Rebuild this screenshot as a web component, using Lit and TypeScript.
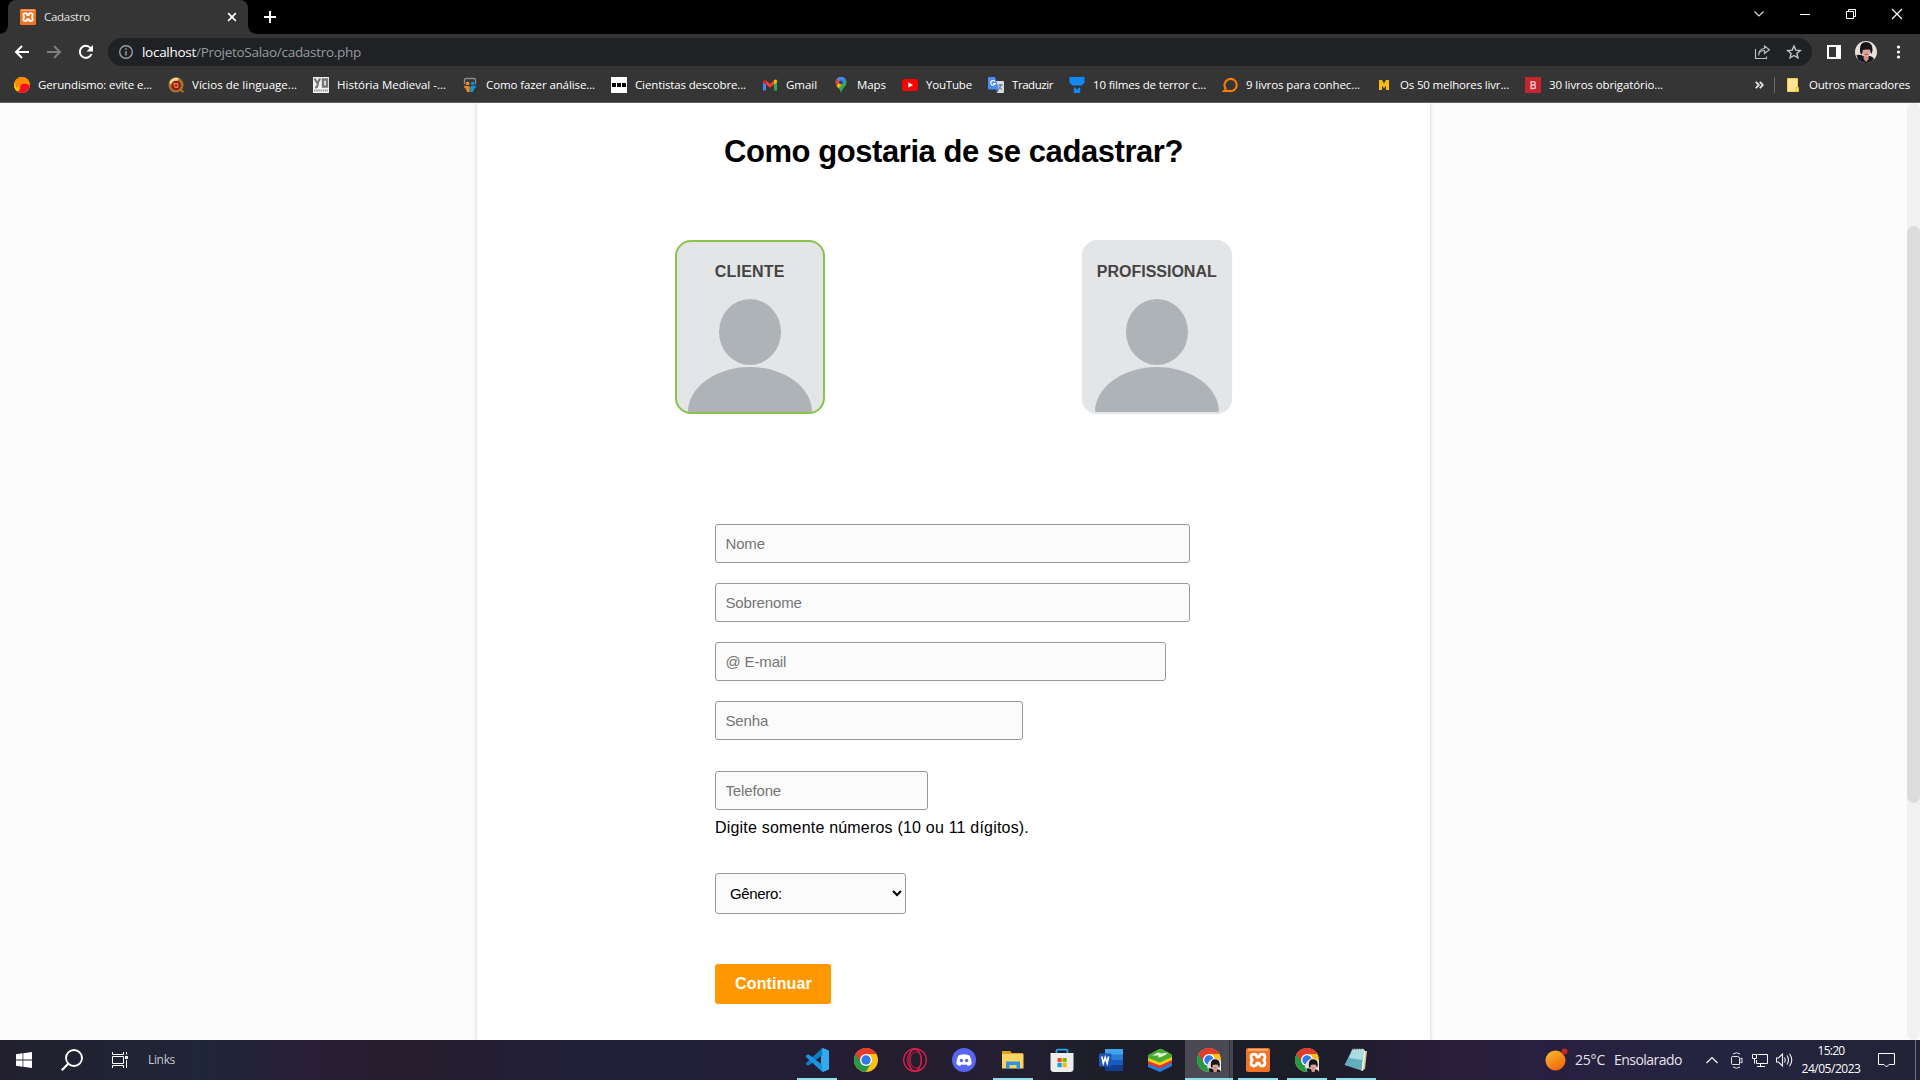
import { LitElement, html, css, svg } from "lit";
import { customElement, property } from "lit/decorators.js";

/* Text set to an exact advance width by spreading the difference over its letters. */
@customElement("fit-text")
class FitText extends LitElement {
  @property({ type: Number }) w = 0;
  static styles = css`
    :host { display: inline-block; white-space: pre; flex: none; }
    .t { display: inline-block; }
  `;
  render() {
    return html`<span class="t"><slot></slot></span>`;
  }
  firstUpdated() {
    const span = this.renderRoot.querySelector(".t") as HTMLElement;
    const n = (this.textContent || "").length;
    const natural = span.getBoundingClientRect().width;
    if (n > 1 && this.w) this.style.letterSpacing = `${(this.w - natural) / n}px`;
    this.style.width = `${this.w}px`;
  }
}

const icon = (size: number, body: unknown, box = size) =>
  html`<svg class="ic" width=${size} height=${size} viewBox="0 0 ${box} ${box}">${body}</svg>`;

const xampp = svg`
  <rect width="24" height="24" rx="2" fill="#f07423"/><rect x="2" y="1" width="20" height="1.6" fill="#fbb98b"/>
  <path d="M8 6.200Q5 6.200 5 9Q5 11 6.400 12Q5 13 5 15Q5 18 8 18Q10.600 18 10.800 15.200H13.200Q13.400 18 16 18Q19 18 19 15Q19 13 17.600 12Q19 11 19 9Q19 6.200 16 6.200Q13.400 6.200 13.200 9H10.800Q10.600 6.200 8 6.200Z" fill="none" stroke="#fff" stroke-width="2.800" stroke-linejoin="round"/>`;

const face = svg`
  <circle cx="11" cy="11" r="11" fill="#e8e0dd"/>
  <path d="M1.500 14Q6 13 8 15H14Q18 15 19 18.500Q15.500 22 11 22T3 18.500Z" fill="#19181b"/>
  <path d="M8.600 14h5v4l-2.400 3-2.600-3z" fill="#cf8f86"/>
  <ellipse cx="11.300" cy="10.500" rx="3.800" ry="5.500" fill="#dfa39d"/>
  <path d="M5.200 12Q4 3 8.500 1.500Q14 0 16.600 4Q18.500 9 16.400 13Q15.400 12 15 8.800L11 8.600L7.800 9Q7.600 12 7 13.500Z" fill="#161417"/>
  <path d="M9.800 13.400h3" stroke="#b9484e" stroke-width="1.200"/>`;

const chrome = svg`
  <circle cx="12" cy="12" r="12" fill="#fbc116"/>
  <path d="M1.600 6A12 12 0 0 0 11.800 24L17.200 15L12 12Z" fill="#279847"/>
  <path d="M1.600 6L7 15L12 6H22.400A12 12 0 0 0 1.600 6Z" fill="#e33b2e"/>
  <circle cx="12" cy="12" r="6" fill="#fff"/><circle cx="12" cy="12" r="4.700" fill="#3279e8"/>`;

const chromeProfile = svg`${chrome}
  <g transform="translate(10.2 10.4) scale(.72)">${face}</g>`;

const bookmarks = [
  { t: "Gerundismo: evite e...", w: 114, i: svg`<circle cx="8" cy="8" r="8" fill="#ff9d00"/><path d="M0 7A8 8 0 0 0 4 15Q6 9 1 5Z" fill="#ffc400"/><path d="M6 10Q7 6 11 6.500Q15 7 15.800 9A8 8 0 0 1 3 14.300Q7 14.500 6 10Z" fill="#f5102a"/><path d="M1 5Q3 0 8 0T15.500 6Q11 3 7 6T3 12Q1 9 1 5Z" fill="#ff8a00"/>` },
  { t: "Vícios de linguage...", w: 105, i: svg`<circle cx="8" cy="7.800" r="7.600" fill="#a8722c"/><path d="M1.500 5Q5 -.5 11 1.200L9 4.500 3 8.500Z" fill="#f3d78f"/><circle cx="8" cy="8.500" r="4.800" fill="#8f1a13"/><path d="M5.500 6.500h4.500v4h-3z" stroke="#e9a55a" fill="#c5301f" stroke-width=".8"/><path d="M12.500 13l3 2" stroke="#b5762c" stroke-width="2"/>` },
  { t: "História Medieval -...", w: 109, i: svg`<rect width="16" height="16" fill="#f2f2f2"/><path d="M1.500 1.500L4.500 6.500L7 1.500M4.800 6Q5 10.500 2 10.500" stroke="#777" stroke-width="2.200" fill="none"/><path d="M10 2.500h4v7h-4z" stroke="#777" stroke-width="2.400" fill="none"/><path d="M1 13.500h14" stroke="#999" stroke-width="2" stroke-dasharray="1.500 .7"/>` },
  { t: "Como fazer análise...", w: 109, i: svg`<path d="M2.500 7V2.500Q2.500 1.500 4 1.500H12Q13.500 1.500 13.500 2.500V7" fill="none" stroke="#8c8c8c" stroke-width="1.300"/><circle cx="5.600" cy="6.400" r="1.900" fill="#f08a1c"/><circle cx="10.600" cy="6.400" r="1.900" fill="#0f8bd0"/><path d="M2 8.500Q4.500 9.500 7.700 9.300V15H5L3.800 11.500Q2 11 2 8.500Z" fill="#f08a1c"/><path d="M14 8.500Q11.500 9.500 8.300 9.300V15H11L12.200 11.500Q14 11 14 8.500Z" fill="#0f9be4"/>` },
  { t: "Cientistas descobre...", w: 111, i: svg`<rect width="16" height="16" fill="#fff"/><path d="M1 6h4v4H1zM6 6h4v4H6zM11 6h4v4h-4z" fill="#000"/>` },
  { t: "Gmail", w: 31, i: svg`<path d="M1 4V13.500H4V7z" fill="#4285f4"/><path d="M15 4V13.500H12V7z" fill="#34a853"/><path d="M4 3.500L8 6.700L12 3.500V7.500L8 10.700L4 7.500z" fill="#ea4335"/><path d="M1 4Q1.600 1.600 4 3.300V7.500L1 5.300z" fill="#c5221f"/><path d="M15 4Q14.400 1.600 12 3.300V7.500L15 5.300z" fill="#fbbc04"/>` },
  { t: "Maps", w: 29, i: svg`<path d="M8 0A5.500 5.500 0 0 0 2.500 5.500Q2.500 8 5 10.500T8 16Q8.500 13 11 10.500T13.500 5.500A5.500 5.500 0 0 0 8 0Z" fill="#34a853"/><path d="M3 3.200A5.500 5.500 0 0 1 9.700 .3L6 5.500 3.700 9Q2 6 3 3.200Z" fill="#ea4335"/><path d="M3.800 1.900A5.500 5.500 0 0 1 13 3.200L9.600 6.800 7 4.600Z" fill="#4285f4"/><path d="M3.600 9L6.300 5.400 9.500 6.900 5.500 11.300Z" fill="#fbbc04"/><circle cx="8" cy="5.500" r="2" fill="#24477d"/>` },
  { t: "YouTube", w: 46, i: svg`<rect y="2" width="16" height="12" rx="2.600" fill="#f00"/><path d="M6.300 5.200L11 8L6.300 10.800Z" fill="#fff"/>` },
  { t: "Traduzir", w: 41, i: svg`<path d="M7 4H15Q16 4 16 5V15Q16 16 15 16H9Z" fill="#d9dde1"/><path d="M0 1Q0 0 1 0H7L11 12.500H1Q0 12.500 0 11.500Z" fill="#4c8bf5"/><path d="M6.900 4.500A2.300 2.300 0 1 0 7.200 6.500H5" fill="none" stroke="#fff" stroke-width="1.200"/><path d="M10 8h5M12.500 7v1Q12.200 11 10.800 12M11 9.500l3 3.500" fill="none" stroke="#67727c"/><path d="M8 12.500h3l-2 3.300z" fill="#2c5fc4"/>` },
  { t: "10 filmes de terror c...", w: 113, i: svg`<path d="M.5 0H15.500V5.500L12.500 8.500H3.500L.5 5.500Z" fill="#118af7"/><path d="M4.800 10.500H6L8 12.500L10 10.500H11.200V16H4.800Z" fill="#118af7"/>` },
  { t: "9 livros para conhec...", w: 114, i: svg`<path d="M4 12A6.100 6.100 0 1 1 7.500 14H2L4.200 12" fill="none" stroke="#f57c00" stroke-width="2.100"/>` },
  { t: "Os 50 melhores livr...", w: 109, i: svg`<path d="M3 13V3H6L8 6.500L10 3H13V13H10V8.500L8 11.500L6 8.500V13Z" fill="#fcb813"/>` },
  { t: "30 livros obrigatório...", w: 114, i: svg`<rect width="16" height="16" fill="#c4262e"/><path d="M6.100 4.800H8.500Q10.200 4.800 10.200 6.400Q10.200 7.800 8.800 8Q10.400 8.200 10.400 9.700Q10.400 11.500 8.500 11.500H6.100ZM6.100 8H9" fill="none" stroke="#f0c3c5" stroke-width="1.400"/>` },
];

interface App { i: unknown; run?: boolean; active?: boolean }

const apps: App[] = [
  { run: true, i: svg`<path d="M17.500 0L24 2.800V21.200L17.500 24L16 22V2Z" fill="#2fa8ee"/><path d="M17.500 0V7L3.400 17.800 1 16.600V15Z" fill="#0f7fc4"/><path d="M17.500 24V17L3.400 6.200 1 7.400V9Z" fill="#1a95df"/><path d="M17.500 0L24 2.800V21.200L17.500 24Z" fill="#35aaf0"/>` },
  { i: chrome },
  { i: svg`<g fill="none" stroke="#e0204f"><circle cx="12" cy="12" r="11.300" stroke-width="1.300"/><ellipse cx="12" cy="12" rx="6.200" ry="11" stroke-width="1.300"/><ellipse cx="13" cy="12" rx="5.600" ry="8.300" stroke-width=".8"/><path d="M7 4Q1 12 7 20" stroke-width=".7"/></g>` },
  { i: svg`<circle cx="12" cy="12" r="12" fill="#5865f2"/><path d="M8.800 6.700Q12 6 15.200 6.700Q17.600 6.800 18.300 9Q20 13 19.500 16.300Q17.500 17.800 15.800 18L14.900 16.500Q12 17.200 9.100 16.500L8.200 18Q6.500 17.800 4.500 16.300Q4 13 5.700 9Q6.400 6.800 8.800 6.700Z" fill="#fff"/><circle cx="9.400" cy="12.500" r="1.700" fill="#5865f2"/><circle cx="14.600" cy="12.500" r="1.700" fill="#5865f2"/>` },
  { run: true, i: svg`<path d="M1 3H9L11 5H22V20H1Z" fill="#e0a11b"/><path d="M1 6H22.500V20.500H1Z" fill="#fcd462"/><path d="M5 13.500H19V21H15.500V17H8.500V21H5Z" fill="#3292dc"/>` },
  { i: svg`<path d="M6.500 7V2.600Q6.500 1.600 7.500 1.600H16.500Q17.500 1.600 17.500 2.600V7" fill="none" stroke="#2aa5ea" stroke-width="1.800"/><path d="M.5 5H23.500V20.500Q23.500 24 20 24H4Q.5 24 .5 20.500Z" fill="#ededed"/><path d="M7.500 10h4.200v4.200H7.500z" fill="#f25022"/><path d="M12.500 10h4.200v4.200h-4.200z" fill="#7fba00"/><path d="M7.500 15h4.200v4.200H7.500z" fill="#00a4ef"/><path d="M12.500 15h4.200v4.200h-4.200z" fill="#ffb900"/>` },
  { i: svg`<path d="M6 1H24V7H6Z" fill="#41a5ee"/><path d="M6 6.500H24V12H6Z" fill="#2b7cd3"/><path d="M6 12H24V17.500H6Z" fill="#185abd"/><path d="M6 17.500H24V23H6Z" fill="#103f91"/><rect y="5.500" width="12.500" height="13" rx="1" fill="#1c57b8"/><path d="M2.800 8.500L4.300 15.200L6.200 9.500L8.100 15.200L9.600 8.500" fill="none" stroke="#fff" stroke-width="1.700"/>` },
  { i: svg`<path d="M0 15L12 19.500L24 14V18L12 24L0 19Z" fill="#1f7fe0"/><path d="M0 12L12 16.500L24 11V14.500L12 20.500L0 16Z" fill="#e83323"/><path d="M0 9L12 13.500L24 8V12L12 17.500L0 13Z" fill="#f8cf16"/><path d="M0 7L11 1Q12.500 .5 14 1L24 6.500V9L12 14.500L0 10Z" fill="#47ad31"/><path d="M4 7.500L10 4.500L13 5.500L20 4.500Q16 9 10 9.500L11 7.500Z" fill="#e5f6d6"/>` },
  { run: true, active: true, i: chromeProfile },
  { run: true, i: xampp },
  { run: true, i: chromeProfile },
  { run: true, i: svg`<path d="M18 3L23 3L21 21L17 23Z" fill="#d9c48f"/><path d="M8 2L20 1.500L17.500 22.500L.5 17Z" fill="#62aebb"/><path d="M8 2L20 1.500L18.500 12L5 10Z" fill="#a8dce0"/><path d="M20 1.500L21.500 4L19 23L17.500 22.500Z" fill="#e9f1ef"/><path d="M8.500 1.600h11.500" stroke="#d8e5e4" stroke-width="1.600" stroke-dasharray="1 .6"/>` },
];

@customElement("browser-chrome")
class BrowserChrome extends LitElement {
  static styles = css`
    :host { display: block; height: 103px; color: #fff; font: 11.500px/16px "Open Sans", "Noto Sans", sans-serif; }
    .ic { display: block; flex: none; }
    .tabs { height: 34px; background: #000; display: flex; padding-left: 8px; }
    .tab { position: relative; width: 240px; height: 34px; box-sizing: border-box; background: #353535; border-radius: 8px 8px 0 0; display: flex; align-items: center; padding: 0 11px 0 12px; color: #e2e2e2; }
    .tab::before, .tab::after { content: ""; position: absolute; bottom: 0; width: 8px; height: 8px; }
    .tab::before { left: -8px; background: radial-gradient(circle at 0 0, transparent 7.5px, #353535 8px); }
    .tab::after { right: -8px; background: radial-gradient(circle at 100% 0, transparent 7.5px, #353535 8px); }
    .tab fit-text { margin-left: 8px; }
    .close { margin-left: auto; }
    .plus { margin: 10px 0 0 15px; }
    .win { margin-left: auto; display: flex; gap: 30px; padding: 6px 15px 0 0; }
    .bar { height: 34px; background: #353535; display: flex; align-items: center; padding: 2px 0 0 14px; box-sizing: border-box; }
    .nav { display: flex; gap: 16px; align-items: center; width: 94px; flex: none; }
    .omni { width: 1704px; height: 28px; border-radius: 14px; background: #202124; display: flex; align-items: center; box-sizing: border-box; padding: 0 10px; }
    .url { display: flex; margin-left: 8px; font-size: 13.500px; line-height: 20px; flex: 1; }
    .path { color: #969a9e; }
    .r { display: flex; gap: 16px; align-items: center; }
    .tools { display: flex; align-items: center; margin-left: 15px; }
    .face { margin-left: 14px; }
    .dots { margin-left: 19px; }
    .bms { height: 35px; background: #353535; border-bottom: 1px solid #5f5f5f; display: flex; align-items: center; padding: 0 10px 0 14px; box-sizing: border-box; }
    .bms fit-text { padding-bottom: 1px; }
    .bm { display: flex; align-items: center; gap: 8px; margin-right: 16px; }
    .end { display: flex; align-items: center; margin-left: auto; }
    .sep { width: 1px; height: 16px; background: #6a6a6a; margin: 0 12px 0 10px; }
    .end fit-text { margin-left: 10px; }
  `;
  render() {
    return html`
      <div class="tabs">
        <div class="tab">
          ${icon(16, xampp, 24)}
          <fit-text w="46">Cadastro</fit-text>
          <svg class="ic close" width="10" height="10"><path d="M1.200 1.200L8.800 8.800M8.800 1.200L1.200 8.800" stroke="#fff" stroke-width="1.800"/></svg>
        </div>
        <svg class="ic plus" width="14" height="14"><path d="M7 1V13M1 7H13" stroke="#fff" stroke-width="2"/></svg>
        <div class="win">
          ${[
            svg`<path d="M3.500 5.500L8 10L12.500 5.500" stroke="#d8d8d8" stroke-width="1.200"/>`,
            svg`<path d="M3 8.500H13" stroke="#fff"/>`,
            svg`<path d="M3.500 5.500H10.500V12.500H3.500ZM5.500 5V3.500H12.500V10.500H11" stroke="#fff"/>`,
            svg`<path d="M3 3L13 13M13 3L3 13" stroke="#fff" stroke-width="1.200"/>`,
          ].map((p) => icon(16, svg`<g fill="none">${p}</g>`))}
        </div>
      </div>
      <div class="bar">
        <div class="nav">
          ${icon(16, svg`<path d="M15 8H2.500M8 2L2 8L8 14" fill="none" stroke="#fff" stroke-width="2"/>`)}
          ${icon(16, svg`<path d="M1 8H13.500M8 2L14 8L8 14" fill="none" stroke="#7e7e7e" stroke-width="2"/>`)}
          ${icon(16, svg`<path d="M13.500 10A6 6 0 1 1 12.500 4L13 4.500" fill="none" stroke="#fff" stroke-width="2"/><path d="M15 1V7.500H8.500Z" fill="#fff"/>`)}
        </div>
        <div class="omni">
          ${icon(16, svg`<circle cx="8" cy="8" r="6.300" fill="none" stroke="#9aa0a6" stroke-width="1.400"/><path d="M8 4.300V5.800M8 7.200V11.600" stroke="#9aa0a6" stroke-width="1.500"/>`)}
          <div class="url"><fit-text w="54">localhost</fit-text><fit-text class="path" w="165">/ProjetoSalao/cadastro.php</fit-text></div>
          <div class="r">
            ${icon(16, svg`<path d="M1.500 5V14.500H12.500V12.500M4.500 11.500Q5 6.500 10.500 6.500V9.500L15.300 5.700L10.500 2V4.500Q5 4.500 4.500 11.500Z" fill="none" stroke="#b9bbbe" stroke-width="1.200"/>`)}
            ${icon(16, svg`<path d="M8 2L9.800 6.100L14.300 6.500L10.900 9.500L11.900 13.900L8 11.500L4.100 13.900L5.100 9.500L1.700 6.500L6.200 6.100Z" fill="none" stroke="#c3c5c8" stroke-width="1.400"/>`)}
          </div>
        </div>
        <div class="tools">
          ${icon(14, svg`<path d="M0 0H14V14H0ZM2 2V12H9V2Z" fill="#fff" fill-rule="evenodd"/>`)}
          <svg class="ic face" width="22" height="22">${face}</svg>
          <svg class="ic dots" width="5" height="14"><circle cx="2.500" cy="2" r="1.600" fill="#fff"/><circle cx="2.500" cy="7" r="1.600" fill="#fff"/><circle cx="2.500" cy="12" r="1.600" fill="#fff"/></svg>
        </div>
      </div>
      <div class="bms">
        ${bookmarks.map((b) => html`<div class="bm">${icon(16, b.i)}<fit-text w=${b.w}>${b.t}</fit-text></div>`)}
        <div class="end">
          <svg class="ic" width="9" height="8"><path d="M.8 .8L3.800 4L.8 7.200M4.800 .8L7.800 4L4.800 7.200" fill="none" stroke="#e8e8e8" stroke-width="1.800"/></svg>
          <div class="sep"></div>
          <svg class="ic" width="12" height="14"><path d="M.5 .5H10.500V13.500H.5Z" fill="#ffe694" stroke="#f2cc4c"/><path d="M9 9.500H11.500V13.500H9Z" fill="#ffe07a" stroke="#eac03a"/></svg>
          <fit-text w="101">Outros marcadores</fit-text>
        </div>
      </div>
    `;
  }
}

@customElement("signup-page")
class SignupPage extends LitElement {
  static styles = css`
    :host { display: flex; height: 937px; background: #fcfcfc; font-family: "Liberation Sans", Arial, sans-serif; color: #000; }
    .view { width: 1907px; display: flex; justify-content: center; overflow: hidden; }
    .sheet { width: 953.500px; height: 937px; background: #fff; box-shadow: 0 0 4px rgba(0, 0, 0, .2); box-sizing: border-box; padding-top: 30px; clip-path: inset(0 -8px); }
    h1 { margin: 0; font-size: 31px; line-height: 37px; display: flex; justify-content: center; }
    .cards { display: flex; gap: 257px; padding-left: 198px; margin-top: 70px; }
    .card { width: 150px; height: 174px; box-sizing: border-box; border: 2px solid #e4e5e7; border-radius: 16px; background: #e4e5e7; display: flex; flex-direction: column; align-items: center; overflow: hidden; padding-top: 21px; font-size: 16px; line-height: 18px; font-weight: bold; color: #444; box-shadow: 0 0 1px rgba(0, 0, 0, .12); }
    .card.on { border-color: #8bc34a; box-shadow: none; }
    .card svg { display: block; margin-top: 18px; flex: none; }
    form { display: flex; flex-direction: column; align-items: flex-start; margin: 110px 0 0 238.250px; }
    input, select { box-sizing: border-box; margin: 0 0 20px; height: 39px; border: 1px solid #999; border-radius: 3px; background-color: #fbfbfb; padding: 0 10px; font: 15px "Liberation Sans", Arial, sans-serif; letter-spacing: -.15px; color: #000; }
    input { padding-left: 9.500px; }
    input::placeholder { color: #757575; }
    .name { width: 475px; }
    .mail { width: 451px; }
    .pass { width: 308px; margin-bottom: 31px; }
    .tel { width: 213px; margin-bottom: 8px; }
    .hint { font-size: 16px; line-height: 19px; }
    select { width: 191px; height: 41px; margin: 36px 0 50px; letter-spacing: -.35px; }
    button { border: 0; margin: 0; padding: 0 0 0 1px; width: 116px; height: 40px; border-radius: 3px; background: #ff9800; color: #fff; font: bold 16px/40px "Liberation Sans", Arial, sans-serif; }
    .scroll { width: 13px; background: #f1f1f1; border-radius: 7px; box-sizing: border-box; padding-top: 123px; }
    .thumb { height: 577px; border-radius: 7px; background: #dcdcdc; }
  `;
  card(label: string, w: number, on: boolean) {
    return html`<div class="card ${on ? "on" : ""}">
      <fit-text w=${w}>${label}</fit-text>
      <svg width="124" height="113" viewBox="0 0 124 113"><ellipse cx="62" cy="33" rx="31" ry="33" fill="#aeb3b7"/><path d="M0 113A62 45 0 0 1 124 113Z" fill="#aeb3b7"/></svg>
    </div>`;
  }
  render() {
    return html`
      <div class="view">
        <div class="sheet">
          <h1><fit-text w="459">Como gostaria de se cadastrar?</fit-text></h1>
          <div class="cards">${this.card("CLIENTE", 70, true)}${this.card("PROFISSIONAL", 120, false)}</div>
          <form>
            <input class="name" placeholder="Nome" />
            <input class="name" placeholder="Sobrenome" />
            <input class="mail" placeholder="@ E-mail" />
            <input class="pass" placeholder="Senha" />
            <input class="tel" placeholder="Telefone" />
            <fit-text class="hint" w="314">Digite somente números (10 ou 11 dígitos).</fit-text>
            <select><option>Gênero:</option></select>
            <button type="button"><fit-text w="77">Continuar</fit-text></button>
          </form>
        </div>
      </div>
      <div class="scroll"><div class="thumb"></div></div>
    `;
  }
}

@customElement("task-bar")
class TaskBar extends LitElement {
  static styles = css`
    :host { display: flex; height: 40px; color: #fff; font: 12px/16px "Open Sans", "Noto Sans", sans-serif; align-items: center;
      background: linear-gradient(90deg, #22202e 0, #1f2638 200px, #2a1e36 320px, #261d2d 400px, #21203a 600px, #241f39 790px, #231d2d 900px, #241f33 1000px, #1d1e29 1110px, #1d1c29 1330px, #281e38 1420px, #291f40 1540px, #232440 1720px, #232337 1920px); }
    .ic { display: block; flex: none; }
    .left { width: 793px; display: flex; align-items: center; padding-left: 16px; box-sizing: border-box; flex: none; }
    .gap { margin-left: 29px; }
    .links { margin-left: 20px; color: #c9c8cf; }
    .apps { display: flex; height: 40px; gap: 1px; }
    .app { width: 48px; height: 40px; display: flex; align-items: center; justify-content: center; box-sizing: border-box; background: linear-gradient(#8ee0ea, #8ee0ea) 50% 100% / 0 2px no-repeat; }
    .run { background-size: 40px 2px; }
    .active { background: linear-gradient(#8ee0ea, #8ee0ea) 0 100% / 48px 2px no-repeat, linear-gradient(90deg, #4b4956 44px, #302f3a 44px, #302f3a 45px, #45444f 45px); }
    .right { display: flex; align-items: center; margin-left: auto; }
    .temp { font-size: 14px; line-height: 20px; color: #e5e4ea; margin-left: 9px; }
    .deg { margin-left: 6px; }
    .up { margin-left: 24px; }
    .cam { margin-left: 13px; }
    .net { margin-left: 9px; }
    .vol { margin-left: 8px; }
    .clock { width: 60px; display: flex; flex-direction: column; align-items: center; gap: 2px; margin-left: 8px; }
    .note { margin-left: 17px; }
    .edge { width: 1px; height: 40px; background: #74737f; margin: 0 4px 0 20px; }
  `;
  render() {
    return html`
      <div class="left">
        ${icon(16, svg`<path d="M0 2.300L6.600 1.300V7.600H0ZM7.300 1.200L16 0V7.600H7.300ZM0 8.400H6.600V14.700L0 13.700ZM7.300 8.400H16V16L7.300 14.800Z" fill="#fff"/>`)}
        <svg class="ic gap" width="22" height="22"><circle cx="13" cy="9" r="8" fill="none" stroke="#fff" stroke-width="1.900"/><path d="M7.200 14.800L.8 21.200" stroke="#fff" stroke-width="2.200"/></svg>
        <svg class="ic gap" width="16" height="16"><path d="M.5 0V2.500H11.500V0M.5 16V13.500H11.500V16M.5 4.500H11.500V11.500H.5ZM14.500 0V2.500M14.500 8V16" fill="none" stroke="#fff"/><path d="M13 4H16V7H13Z" fill="#fff"/></svg>
        <fit-text class="links" w="27">Links</fit-text>
      </div>
      <div class="apps">
        ${apps.map((a) => html`<div class="app ${a.run ? "run" : ""} ${a.active ? "active" : ""}">${icon(24, a.i)}</div>`)}
      </div>
      <div class="right">
        <svg class="ic" width="24" height="24"><defs><linearGradient id="sun" x1="0" y1="0" x2=".6" y2="1"><stop offset="0" stop-color="#f9c02f"/><stop offset="1" stop-color="#f4680f"/></linearGradient></defs><circle cx="10.500" cy="12.500" r="10" fill="url(#sun)"/><circle cx="19.500" cy="3.500" r="3" fill="#c9281c"/></svg>
        <fit-text class="temp deg" w="30">25°C</fit-text>
        <fit-text class="temp" w="68">Ensolarado</fit-text>
        <svg class="ic up" width="12" height="8"><path d="M.5 7L6 1.500L11.500 7" fill="none" stroke="#fff" stroke-width="1.200"/></svg>
        <svg class="ic cam" width="12" height="17"><path d="M.5 5.500Q.5 4.500 1.500 4.500H6.500Q8.500 4.500 8.500 6.500V12.500H1.500Q.5 12.500 .5 11.500ZM8.500 7.500L11 6V11L8.500 9.500M2 2Q5.500 -.5 9 2M2 15Q5.500 17.500 9 15" fill="none" stroke="#e6e6ea"/></svg>
        <svg class="ic net" width="16" height="14"><path d="M5.500 1.500H15.500V10.500H4.500V7M8.500 11V13.500M5 13.500H13M.5 1.500H4.500V5.500H.5ZM2.500 5.500V10.500" fill="none" stroke="#fff"/></svg>
        <svg class="ic vol" width="17" height="14"><path d="M.5 5H2.500L6.500 1V13L2.500 9H.5ZM8.500 4.500Q10 7 8.500 9.500M11 2.500Q14 7 11 11.500M13.500 .8Q18 7 13.500 13.200" fill="none" stroke="#f2f2f4" stroke-width="1.100"/></svg>
        <div class="clock"><fit-text w="27">15:20</fit-text><fit-text w="59">24/05/2023</fit-text></div>
        <svg class="ic note" width="17" height="17"><path d="M.5 1.500H16.500V12.500H11L8.500 15L6 12.500H.5Z" fill="none" stroke="#fff"/></svg>
        <div class="edge"></div>
      </div>
    `;
  }
}

@customElement("app-root")
class AppRoot extends LitElement {
  static styles = css`
    :host { display: block; width: 1920px; height: 1080px; overflow: hidden; }
  `;
  render() {
    return html`<browser-chrome></browser-chrome><signup-page></signup-page><task-bar></task-bar>`;
  }
}
